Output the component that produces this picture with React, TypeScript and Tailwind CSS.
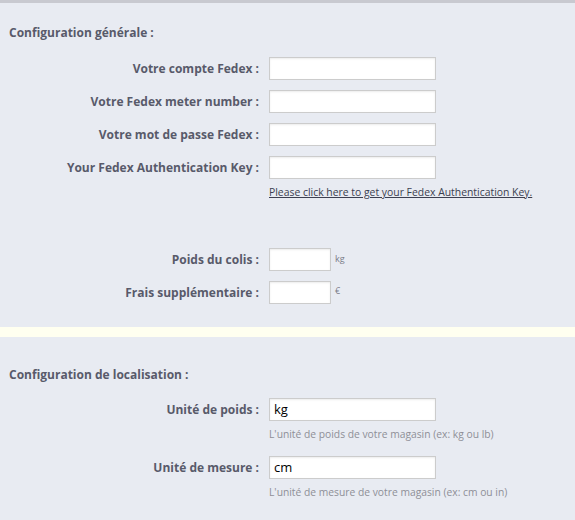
import React from "react";

const font = { fontFamily: '"Open Sans", "Noto Sans", sans-serif' };

function Input({ value = "", w = "w-[167px]" }: { value?: string; w?: string }) {
  return (
    <div
      className={`${w} h-[23px] bg-white border border-[#cccccc] shadow-[inset_0_1px_2px_rgba(0,0,0,0.08)] flex items-center pl-[4px] text-[13px] text-black`}
    >
      {value}
    </div>
  );
}

function Row({ label, children }: { label: string; children: React.ReactNode }) {
  return (
    <div className="flex items-center">
      <div className="w-[260px] text-right pr-[1px] text-[12px] font-bold text-[#585a6a] leading-[16px]">{label}</div>
      <div className="ml-[9px] flex items-center">{children}</div>
    </div>
  );
}

export default function App() {
  return (
    <div style={font} className="w-[575px] h-[520px] bg-[#e8ebf2] overflow-hidden">
      <div className="h-[3px] bg-[#c8c9d0]" />
      <div className="pt-[22px] h-[324px]">
        <div className="pl-[9px] text-[12px] font-bold text-[#585a6a] leading-[16px]">Configuration générale :</div>
        <div className="mt-[16px] flex flex-col gap-[10px]">
          <Row label="Votre compte Fedex :"><Input /></Row>
          <Row label="Votre Fedex meter number :"><Input /></Row>
          <Row label="Votre mot de passe Fedex :"><Input /></Row>
          <Row label="Your Fedex Authentication Key :"><Input /></Row>
        </div>
        <div className="ml-[269px] mt-[6px] text-[10.4px] leading-[14px] text-[#3c3f50] underline">
          Please click here to get your Fedex Authentication Key.
        </div>
        <div className="mt-[49px] flex flex-col gap-[10px]">
          <Row label="Poids du colis :">
            <Input w="w-[62px]" />
            <span className="ml-[4px] text-[9px] text-[#7a7c88] -mt-[2px]">kg</span>
          </Row>
          <Row label="Frais supplémentaire :">
            <Input w="w-[62px]" />
            <span className="ml-[4px] text-[9px] text-[#7a7c88] -mt-[4px]">€</span>
          </Row>
        </div>
      </div>
      <div className="h-[10px] bg-[#fffff0]" />
      <div className="pt-[30px]">
        <div className="pl-[9px] text-[12px] font-bold text-[#585a6a] leading-[16px]">Configuration de localisation :</div>
        <div className="mt-[15px]">
          <Row label="Unité de poids :"><Input value="kg" /></Row>
          <div className="ml-[269px] mt-[6px] text-[10.3px] leading-[14px] text-[#8e8f97]">
            L'unité de poids de votre magasin (ex: kg ou lb)
          </div>
          <div className="mt-[15px]">
            <Row label="Unité de mesure :"><Input value="cm" /></Row>
          </div>
          <div className="ml-[269px] mt-[6px] text-[10.3px] leading-[14px] text-[#8e8f97]">
            L'unité de mesure de votre magasin (ex: cm ou in)
          </div>
        </div>
      </div>
    </div>
  );
}
